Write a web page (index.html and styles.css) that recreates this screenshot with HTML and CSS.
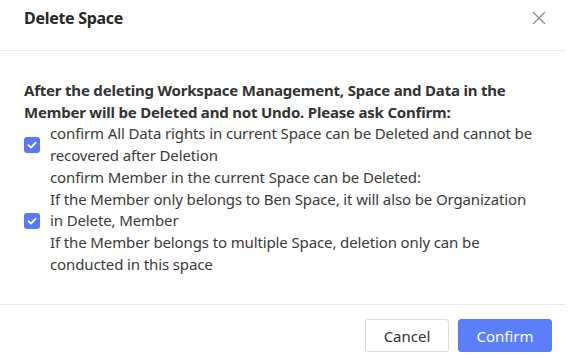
FILE: index.html
```html
<!DOCTYPE html>
<html lang="en">

<head>
  <meta charset="UTF-8">
  <meta name="viewport" content="width=device-width, initial-scale=1.0">
  <title>Delete Space</title>
  <link rel="stylesheet" href="styles.css">
</head>

<body>
  <div class="modal">
    <header class="modal-header">
      <h1>Delete Space</h1>
      <span class="close-btn">
        <svg width="14" height="14" viewBox="0 0 14 14">
          <path d="M1 1 L13 13 M13 1 L1 13" stroke="#8c8c8c" stroke-width="1.3" fill="none" />
        </svg>
      </span>
    </header>
    <main class="modal-body">
      <p class="warning">After the deleting Workspace Management, Space and Data in the Member will be Deleted and not Undo. Please ask Confirm:</p>
      <label class="check-row">
        <span class="checkbox">
          <svg width="12" height="12" viewBox="0 0 12 12">
            <path d="M2.5 6.2 L5 8.6 L9.6 3.6" stroke="#fff" stroke-width="1.8" fill="none" stroke-linecap="round" stroke-linejoin="round" />
          </svg>
        </span>
        <span class="check-text">confirm All Data rights in current Space can be Deleted and cannot be recovered after Deletion</span>
      </label>
      <label class="check-row">
        <span class="checkbox">
          <svg width="12" height="12" viewBox="0 0 12 12">
            <path d="M2.5 6.2 L5 8.6 L9.6 3.6" stroke="#fff" stroke-width="1.8" fill="none" stroke-linecap="round" stroke-linejoin="round" />
          </svg>
        </span>
        <span class="check-text">confirm Member in the current Space can be Deleted:<br>If the Member only belongs to Ben Space, it will also be Organization in Delete, Member<br>If the Member belongs to multiple Space, deletion only can be conducted in this space</span>
      </label>
    </main>
    <footer class="modal-footer">
      <button class="btn btn-cancel">Cancel</button>
      <button class="btn btn-confirm">Confirm</button>
    </footer>
  </div>
</body>

</html>
```

FILE: styles.css
```css
body,
h1,
p {
  margin: 0;
  padding: 0;
}

body {
  background-color: #fff;
  font-family: "Noto Sans", "Open Sans", Arial, sans-serif;
  color: #333;
}

.modal {
  width: 566px;
  height: 358px;
  background-color: #fff;
}

.modal-header {
  height: 50px;
  display: flex;
  align-items: center;
  justify-content: space-between;
  padding: 0 24px;
  border-bottom: 1px solid #e8e8e8;
}

.modal-header h1 {
  font-size: 16px;
  font-weight: bold;
  letter-spacing: -0.3px;
  color: #262626;
  margin-top: -14px;
}

.close-btn {
  display: flex;
  margin-top: -14px;
  margin-right: -4px;
}

.modal-body {
  padding: 29px 24px 29px 24px;
  font-size: 15px;
  line-height: 21.7px;
  letter-spacing: -0.12px;
}

.warning {
  font-weight: bold;
  letter-spacing: -0.2px;
  color: #333;
}

.check-row {
  display: flex;
  align-items: center;
  gap: 10px;
}

.checkbox {
  flex: none;
  width: 16px;
  height: 16px;
  border-radius: 3px;
  background-color: #5878f8;
  display: flex;
  align-items: center;
  justify-content: center;
}

.check-text {
  color: #3a3a3a;
}

.modal-footer {
  display: flex;
  justify-content: flex-end;
  gap: 9px;
  padding: 14px 14px 0 0;
  border-top: 1px solid #e8e8e8;
}

.btn {
  height: 33px;
  border-radius: 3px;
  font-family: inherit;
  font-size: 15px;
  cursor: pointer;
}

.btn-cancel {
  width: 84px;
  background-color: #fff;
  border: 1px solid #dcdcdc;
  color: #333;
}

.btn-confirm {
  width: 94px;
  background-color: #5b7ffb;
  border: 1px solid #5b7ffb;
  color: #fff;
}
```
